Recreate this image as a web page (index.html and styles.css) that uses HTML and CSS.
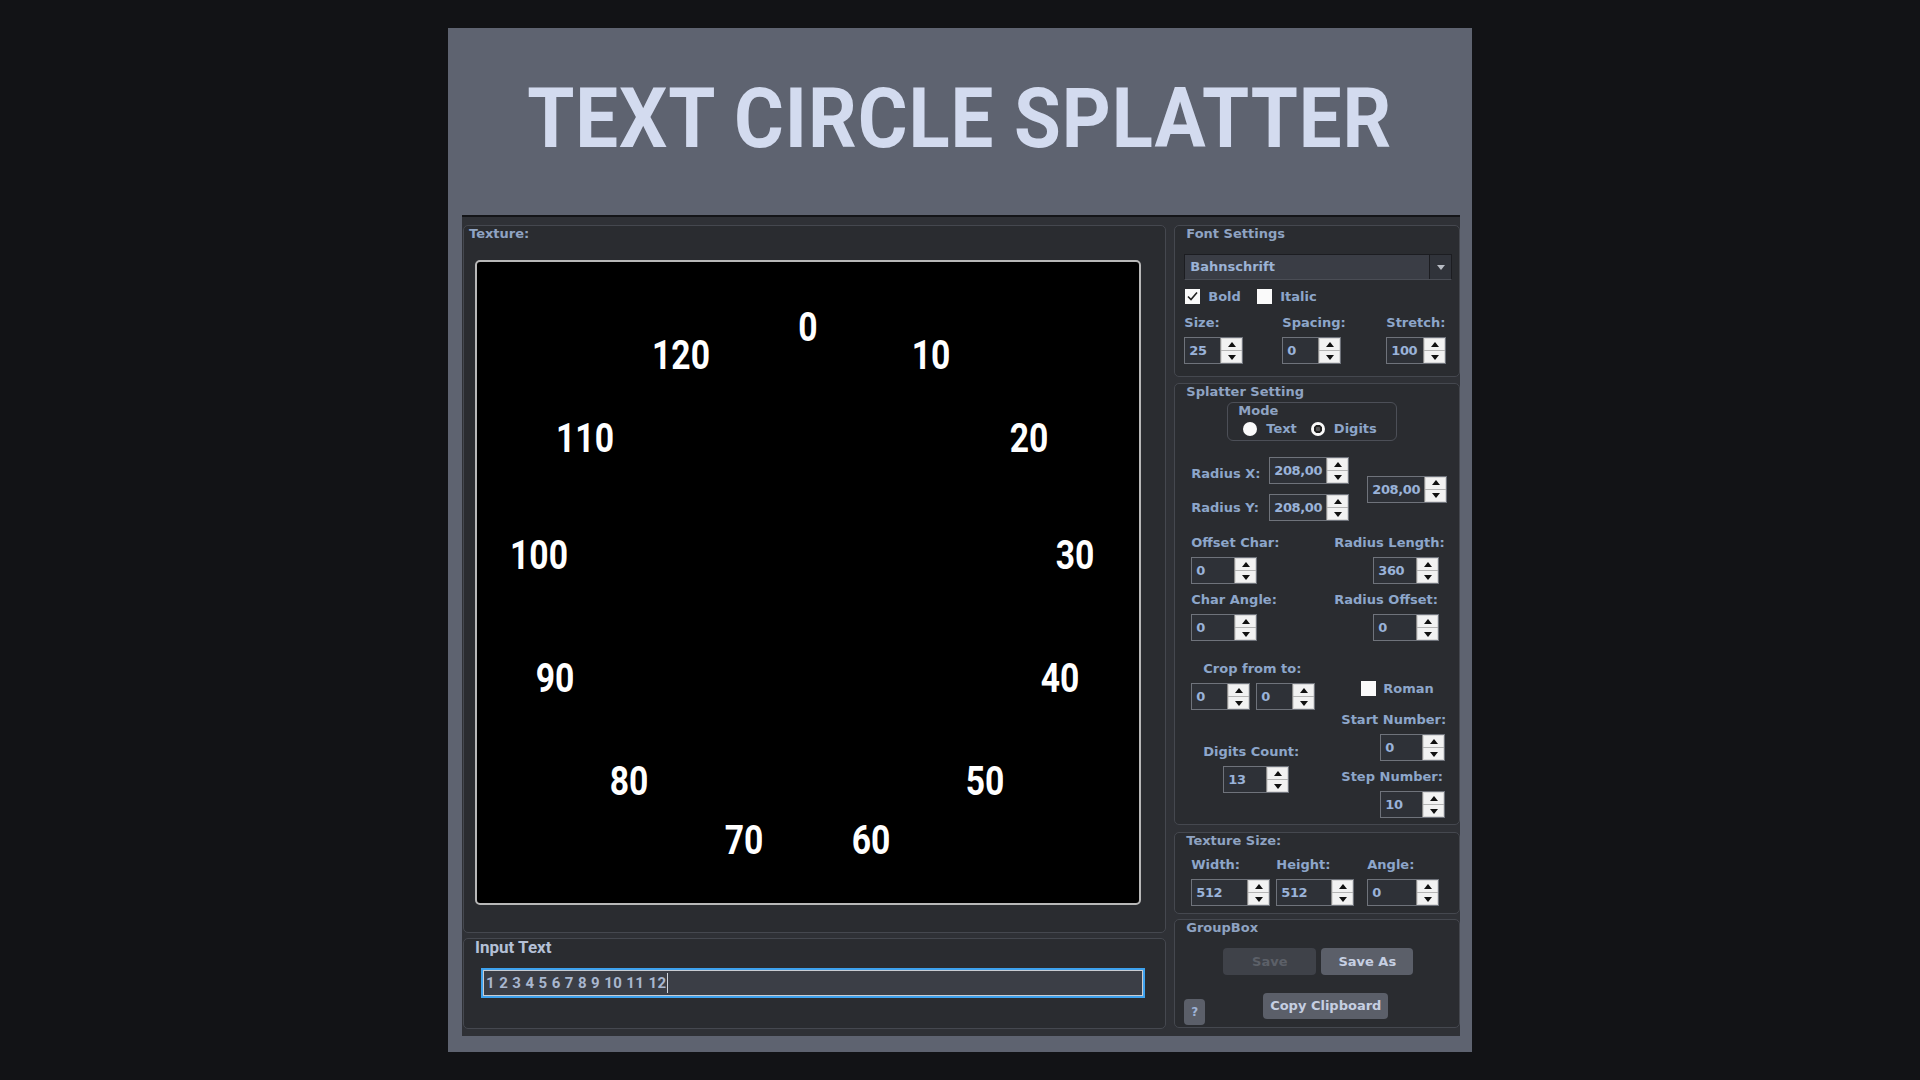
FILE: index.html
```html
<!DOCTYPE html>
<html>
<head>
<meta charset="utf-8">
<link rel="stylesheet" href="styles.css">
</head>
<body>
<div class="card">
  <header class="hero"><h1>TEXT CIRCLE SPLATTER</h1></header>
  <main class="app">
    <section class="left">
      <div class="group tex">
        <div class="gtitle tex-title">Texture:</div>
        <div class="canvas">
          <span class="num" style="left:331px;top:65px">0</span>
          <span class="num" style="left:454px;top:93px">10</span>
          <span class="num" style="left:552px;top:176px">20</span>
          <span class="num" style="left:598px;top:293px">30</span>
          <span class="num" style="left:583px;top:416px">40</span>
          <span class="num" style="left:508px;top:519px">50</span>
          <span class="num" style="left:394px;top:578px">60</span>
          <span class="num" style="left:267px;top:578px">70</span>
          <span class="num" style="left:152px;top:519px">80</span>
          <span class="num" style="left:78px;top:416px">90</span>
          <span class="num" style="left:62px;top:293px">100</span>
          <span class="num" style="left:108px;top:176px">110</span>
          <span class="num" style="left:204px;top:93px">120</span>
        </div>
      </div>
      <div class="group inp">
        <div class="gtitle inp-title">Input Text</div>
        <div class="textin"><span class="txt">1 2 3 4 5 6 7 8 9 10 11 12</span><span class="caret"></span></div>
      </div>
    </section>

    <section class="right">
      <div class="group fs">
        <div class="gtitle rtitle">Font Settings</div>
        <div class="combo"><span class="cval">Bahnschrift</span><span class="carrow"></span></div>
        <div class="checks">
          <label class="chk first"><span class="box checked"><svg viewBox="0 0 15 15" width="15" height="15"><path d="M3 7.5 L6 10.5 L12 3.5" fill="none" stroke="#222" stroke-width="1.6"/></svg></span><span class="lbl">Bold</span></label>
          <label class="chk"><span class="box"></span><span class="lbl">Italic</span></label>
        </div>
        <div class="fsgrid">
          <span class="lbl">Size:</span>
          <span class="lbl">Spacing:</span>
          <span class="lbl">Stretch:</span>
          <div class="spin w59"><span class="v">25</span><span class="b"><i class="up"></i><i class="dn"></i></span></div>
          <div class="spin w59"><span class="v">0</span><span class="b"><i class="up"></i><i class="dn"></i></span></div>
          <div class="spin w60"><span class="v">100</span><span class="b"><i class="up"></i><i class="dn"></i></span></div>
        </div>
      </div>

      <div class="group sp">
        <div class="gtitle rtitle">Splatter Setting</div>
        <div class="mode">
          <div class="mtitle">Mode</div>
          <div class="radios">
            <span class="radio"></span><span class="lbl rl">Text</span>
            <span class="radio on"></span><span class="lbl rl">Digits</span>
          </div>
        </div>
        <div class="radius">
          <span class="lbl rx">Radius X:</span>
          <div class="spin w80 s1"><span class="v">208,00</span><span class="b"><i class="up"></i><i class="dn"></i></span></div>
          <span class="lbl ry">Radius Y:</span>
          <div class="spin w80 s2"><span class="v">208,00</span><span class="b"><i class="up"></i><i class="dn"></i></span></div>
          <div class="spin w80 s3"><span class="v">208,00</span><span class="b"><i class="up"></i><i class="dn"></i></span></div>
        </div>
        <div class="rowc">
          <div class="colc left-c">
            <span class="lbl">Offset Char:</span>
            <div class="spin w66 mt6"><span class="v">0</span><span class="b"><i class="up"></i><i class="dn"></i></span></div>
            <span class="lbl mt8">Char Angle:</span>
            <div class="spin w66 mt6"><span class="v">0</span><span class="b"><i class="up"></i><i class="dn"></i></span></div>
          </div>
          <div class="colc">
            <span class="lbl">Radius Length:</span>
            <div class="spin w66 mt6 ml39"><span class="v">360</span><span class="b"><i class="up"></i><i class="dn"></i></span></div>
            <span class="lbl mt8">Radius Offset:</span>
            <div class="spin w66 mt6 ml39"><span class="v">0</span><span class="b"><i class="up"></i><i class="dn"></i></span></div>
          </div>
        </div>
        <div class="rowd">
          <div class="cold left-d">
            <span class="lbl ml12">Crop from to:</span>
            <div class="crops">
              <div class="spin w59"><span class="v">0</span><span class="b"><i class="up"></i><i class="dn"></i></span></div>
              <div class="spin w59"><span class="v">0</span><span class="b"><i class="up"></i><i class="dn"></i></span></div>
            </div>
            <span class="lbl ml12 mt34">Digits Count:</span>
            <div class="spin w66 mt6 ml32"><span class="v">13</span><span class="b"><i class="up"></i><i class="dn"></i></span></div>
          </div>
          <div class="cold">
            <label class="chk roman"><span class="box"></span><span class="lbl">Roman</span></label>
            <span class="lbl mt16">Start Number:</span>
            <div class="spin w65 mt6 ml39"><span class="v">0</span><span class="b"><i class="up"></i><i class="dn"></i></span></div>
            <span class="lbl mt8">Step Number:</span>
            <div class="spin w65 mt6 ml39"><span class="v">10</span><span class="b"><i class="up"></i><i class="dn"></i></span></div>
          </div>
        </div>
      </div>

      <div class="group ts">
        <div class="gtitle rtitle">Texture Size:</div>
        <div class="tsgrid">
          <span class="lbl">Width:</span>
          <span class="lbl">Height:</span>
          <span class="lbl">Angle:</span>
          <div class="spin w79"><span class="v">512</span><span class="b"><i class="up"></i><i class="dn"></i></span></div>
          <div class="spin w78"><span class="v">512</span><span class="b"><i class="up"></i><i class="dn"></i></span></div>
          <div class="spin w72"><span class="v">0</span><span class="b"><i class="up"></i><i class="dn"></i></span></div>
        </div>
      </div>

      <div class="group gb">
        <div class="gtitle rtitle">GroupBox</div>
        <div class="brow1">
          <button class="btn save" disabled>Save</button>
          <button class="btn saveas">Save As</button>
        </div>
        <div class="brow2">
          <button class="btn help">?</button>
          <button class="btn copy">Copy Clipboard</button>
        </div>
      </div>
    </section>
  </main>
</div>
</body>
</html>
```

FILE: styles.css
```css
* { box-sizing: border-box; }

body {
  margin: 0;
  background: #121316;
  font-family: "DejaVu Sans", sans-serif;
}

.card {
  width: 1024px;
  height: 1024px;
  margin: 28px 0 0 448px;
  background: #5e6370;
  display: flex;
  flex-direction: column;
}

.hero {
  height: 187px;
  display: flex;
  align-items: center;
  justify-content: center;
  padding-bottom: 6px;
}

.hero h1 {
  margin: 0;
  font-family: "Roboto", "Liberation Sans", sans-serif;
  font-weight: bold;
  font-size: 83px;
  line-height: 1;
  letter-spacing: 1px;
  color: #d3dbef;
  white-space: nowrap;
  transform: scaleX(0.917);
}

.app {
  height: 821px;
  margin: 0 12px 16px 14px;
  background: #2f3136;
  border-top: 2px solid #141518;
  padding-top: 8px;
  display: flex;
  align-items: flex-start;
  gap: 8px;
}

.left {
  width: 704px;
  margin-left: 1px;
  display: flex;
  flex-direction: column;
  gap: 5px;
}

.group {
  border: 1px solid #45484f;
  border-radius: 5px;
  background: #2a2c30;
}

.gtitle {
  font: bold 13px/16px "DejaVu Sans", sans-serif;
  color: #8fa3c2;
}

.lbl {
  font: bold 13px/16px "DejaVu Sans", sans-serif;
  color: #8da6ca;
  white-space: nowrap;
}

/* Texture */
.tex { height: 708px; }
.tex-title { padding-left: 5px; }

.canvas {
  position: relative;
  margin: 18px 0 0 11px;
  width: 666px;
  height: 645px;
  background: #000;
  border: 2px solid #b8b8b8;
  border-radius: 5px;
}

.num {
  position: absolute;
  transform: translate(-50%, -50%) scaleX(0.82);
  font-family: "Roboto", "Liberation Sans", sans-serif;
  font-weight: bold;
  font-size: 41px;
  line-height: 1;
  color: #fff;
  white-space: nowrap;
}

/* Input text */
.inp { height: 91px; }
.inp-title {
  padding-left: 11px;
  font-family: "Roboto", "Liberation Sans", sans-serif;
  font-size: 17px;
  color: #b4c0d6;
}

.textin {
  margin: 13px 0 0 17px;
  width: 664px;
  height: 30px;
  border: 2px solid #3ea2ee;
  box-shadow: inset 0 0 0 1px #c9ccd2;
  background: #3b3e46;
  display: flex;
  align-items: center;
  padding-left: 3px;
}

.txt {
  font-family: "Roboto", "Liberation Sans", sans-serif;
  font-weight: bold;
  font-size: 15px;
  letter-spacing: 0.4px;
  color: #a9b7cf;
}

.caret {
  width: 1px;
  height: 20px;
  background: #d0d4dc;
}

/* Right column */
.right {
  width: 286px;
  display: flex;
  flex-direction: column;
}

.rtitle { padding-left: 11px; }

.fs { height: 152px; margin-bottom: 6px; }
.sp { height: 442px; margin-bottom: 7px; }
.ts { height: 82px; margin-bottom: 5px; }
.gb { height: 109px; }

.combo {
  margin: 12px 7px 0 9px;
  height: 26px;
  background: #3a3d45;
  border: 1px solid #1c1d21;
  border-bottom-color: #4a4d55;
  display: flex;
  align-items: center;
}

.cval {
  flex: 1;
  padding-left: 5px;
  font: bold 13px/16px "DejaVu Sans", sans-serif;
  color: #9cb3d6;
}

.carrow {
  width: 22px;
  height: 100%;
  background: #30333a;
  border-left: 1px solid #1c1d21;
  display: flex;
  align-items: center;
  justify-content: center;
}

.carrow::after {
  content: "";
  border-left: 4px solid transparent;
  border-right: 4px solid transparent;
  border-top: 5px solid #b8bcc4;
}

.checks {
  margin: 9px 0 0 10px;
  height: 15px;
  display: flex;
  align-items: center;
}

.chk {
  display: flex;
  align-items: center;
  gap: 8px;
}

.chk.first { width: 72px; }

.box {
  width: 15px;
  height: 15px;
  background: #fafafa;
  display: block;
}

.box svg { display: block; }

.fsgrid {
  margin: 11px 0 0 9px;
  display: grid;
  grid-template-columns: 98px 104px 1fr;
  row-gap: 6px;
}

/* Spin box */
.spin {
  display: flex;
  height: 27px;
  border: 1px solid #6f737b;
  background: #2e3137;
}

.spin .v {
  flex: 1;
  font: bold 13px/25px "DejaVu Sans", sans-serif;
  color: #9ab3d9;
  padding-left: 4px;
  letter-spacing: -0.4px;
  white-space: nowrap;
  overflow: hidden;
}

.spin .b {
  width: 22px;
  background: #f2f2f2;
  border-left: 1px solid #8a8a8a;
  box-shadow: inset 0 0 0 1px #d8d8d8;
  display: flex;
  flex-direction: column;
}

.spin .b i {
  flex: 1;
  display: flex;
  align-items: center;
  justify-content: center;
}

.spin .b i + i { border-top: 1px solid #b4b4b4; }

.spin .b i::after {
  content: "";
  border-left: 4px solid transparent;
  border-right: 4px solid transparent;
}

.spin .b .up::after { border-bottom: 5px solid #111; }
.spin .b .dn::after { border-top: 5px solid #111; }

.w59 { width: 59px; }
.w60 { width: 60px; }
.w65 { width: 65px; }
.w66 { width: 66px; }
.w72 { width: 72px; }
.w78 { width: 78px; }
.w79 { width: 79px; }
.w80 { width: 80px; }

.mt6 { margin-top: 6px; }
.mt8 { margin-top: 8px; }
.mt16 { margin-top: 16px; }
.mt34 { margin-top: 34px; }
.ml12 { margin-left: 12px; }
.ml32 { margin-left: 32px; }
.ml39 { margin-left: 39px; }

/* Splatter */
.mode {
  margin: 2px 0 0 52px;
  width: 170px;
  height: 39px;
  border: 1px solid #4c4f57;
  border-radius: 6px;
}

.mtitle {
  font: bold 13px/14px "DejaVu Sans", sans-serif;
  color: #8fa3c2;
  padding: 1px 0 0 10px;
}

.radios {
  margin: 4px 0 0 15px;
  display: flex;
  align-items: center;
  height: 14px;
}

.radio {
  width: 14px;
  height: 14px;
  border-radius: 50%;
  background: #fafafa;
}

.radio.on {
  background: radial-gradient(circle, #555 0 2px, #222 2.5px 4px, #fafafa 4.5px);
  margin-left: 14px;
}

.rl { margin-left: 9px; }

.radius {
  margin: 16px 0 0 16px;
  display: grid;
  grid-template-columns: 78px 80px 18px 80px;
  grid-template-rows: 27px 27px;
  row-gap: 10px;
  align-items: center;
}

.rx { grid-column: 1; grid-row: 1; padding-top: 6px; }
.s1 { grid-column: 2; grid-row: 1; }
.ry { grid-column: 1; grid-row: 2; }
.s2 { grid-column: 2; grid-row: 2; }
.s3 { grid-column: 4; grid-row: 1 / 3; }

.rowc {
  margin: 14px 0 0 16px;
  display: flex;
}

.colc {
  display: flex;
  flex-direction: column;
  align-items: flex-start;
}

.left-c { width: 143px; }

.rowd {
  margin: 20px 0 0 16px;
  display: flex;
}

.cold {
  display: flex;
  flex-direction: column;
  align-items: flex-start;
}

.left-d { width: 150px; }

.crops {
  margin-top: 6px;
  display: flex;
  gap: 6px;
}

.roman {
  margin: 20px 0 0 20px;
  height: 15px;
  gap: 7px;
}

/* Texture size */
.tsgrid {
  margin: 8px 0 0 16px;
  display: grid;
  grid-template-columns: 85px 91px 1fr;
  row-gap: 6px;
}

/* Buttons */
.btn {
  border: none;
  border-radius: 4px;
  font: bold 13px/16px "DejaVu Sans", sans-serif;
  padding: 0;
  background: #5b5f69;
  color: #c6cfe2;
}

.brow1 {
  margin: 12px 0 0 48px;
  display: flex;
  gap: 5px;
}

.save {
  width: 93px;
  height: 27px;
  background: #3f4249;
  color: #5c6068;
}

.saveas {
  width: 92px;
  height: 27px;
}

.brow2 {
  margin: 18px 0 0 9px;
  display: flex;
  align-items: flex-start;
}

.help {
  width: 21px;
  height: 26px;
  margin-top: 6px;
  color: #9fb3d6;
  font-size: 12px;
}

.copy {
  width: 125px;
  height: 26px;
  margin-left: 58px;
}
```
